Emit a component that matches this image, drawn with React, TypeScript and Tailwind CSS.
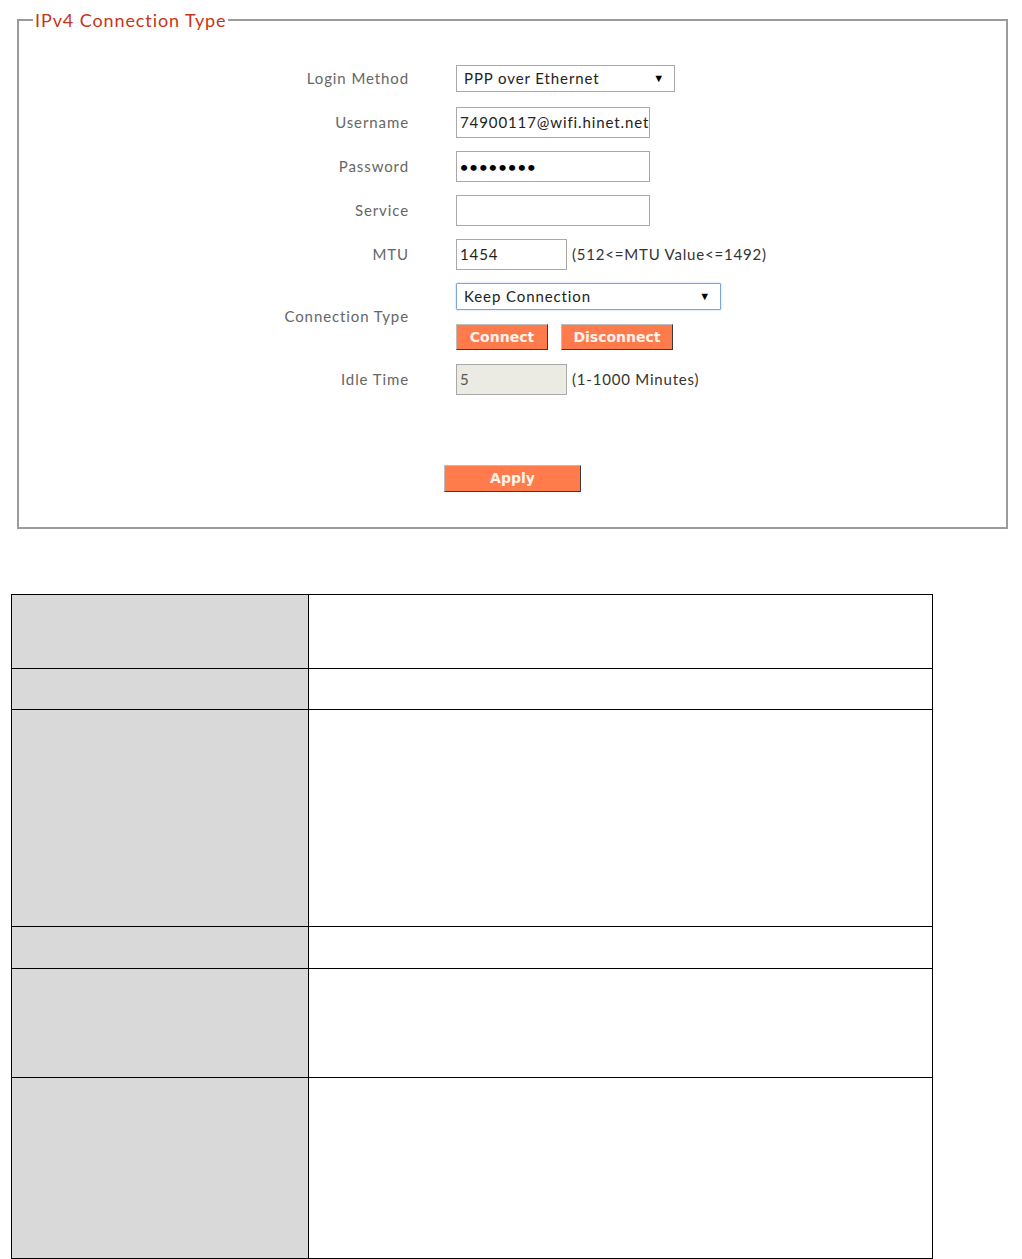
import React from "react";

const font = { fontFamily: "Lato, 'Open Sans', sans-serif" };

function Row({ label, children }: { label: string; children: React.ReactNode }) {
  return (
    <div className="flex h-[44px] items-center">
      <div className="w-[390px] pr-0 text-right text-[15px] tracking-[0.9px] text-[#666]">{label}</div>
      <div className="ml-[47px] flex items-center">{children}</div>
    </div>
  );
}

function Btn({ children, w, h = "h-[26px]" }: { children: React.ReactNode; w: string; h?: string }) {
  return (
    <div
      className={`${w} ${h} flex items-center justify-center border border-t-[#bdbdbd] border-l-[#bdbdbd] border-r-[#3a3a3a] border-b-[#3a3a3a] bg-[#ff7b4c] text-[14px] font-bold text-[#fff4ec]`}
      style={{ fontFamily: "'DejaVu Sans', Verdana, sans-serif" }}
    >
      {children}
    </div>
  );
}

export default function App() {
  const rows = [73, 41, 217, 42, 109, 181];
  return (
    <div className="min-h-[1259px] w-[1022px] bg-white" style={font}>
      <div className="h-[9px]" />
      <fieldset className="ml-[17px] w-[991px] border-2 border-[#9b9b9b] px-0 pb-[35px] pt-[25px]">
        <legend className="ml-[14px] px-[2px] text-[18px] leading-[22px] tracking-[0.9px] text-[#c8341a]">IPv4 Connection Type</legend>
        <div className="flex flex-col">
          <Row label="Login Method">
            <div className="flex h-[27px] w-[219px] items-center justify-between border border-[#a9a9a9] pl-[7px] pr-[9px] text-[15px] tracking-[0.9px] text-[#222]">
              <span>PPP over Ethernet</span>
              <span className="text-[11px] text-black">▼</span>
            </div>
          </Row>
          <Row label="Username">
            <div className="flex h-[31px] w-[194px] items-center overflow-hidden whitespace-nowrap border border-[#a9a9a9] pl-[3px] text-[15px] tracking-[0.9px] text-[#222]">
              74900117@wifi.hinet.net
            </div>
          </Row>
          <Row label="Password">
            <div className="flex h-[31px] w-[194px] items-center border border-[#a9a9a9] pl-[3px] text-[14px] font-bold tracking-[1.5px] text-black">
              ••••••••
            </div>
          </Row>
          <Row label="Service">
            <div className="h-[31px] w-[194px] border border-[#a9a9a9]" />
          </Row>
          <Row label="MTU">
            <div className="flex h-[31px] w-[111px] items-center border border-[#a9a9a9] pl-[3px] text-[15px] tracking-[0.9px] text-[#222]">1454</div>
            <span className="ml-[5px] text-[15px] tracking-[0.8px] text-[#333]">(512&lt;=MTU Value&lt;=1492)</span>
          </Row>
          <div className="flex h-[81px] items-center">
            <div className="w-[390px] text-right text-[15px] tracking-[0.9px] text-[#666]">Connection Type</div>
            <div className="ml-[47px] flex flex-col gap-[14px]">
              <div className="flex h-[27px] w-[265px] items-center justify-between rounded-[1px] border border-[#7aa7e0] pl-[7px] pr-[9px] text-[15px] tracking-[0.9px] text-[#222] shadow-[0_0_2px_#9fc3ef]">
                <span>Keep Connection</span>
                <span className="text-[11px] text-black">▼</span>
              </div>
              <div className="flex gap-[13px]">
                <Btn w="w-[92px]">Connect</Btn>
                <Btn w="w-[112px]">Disconnect</Btn>
              </div>
            </div>
          </div>
          <Row label="Idle Time">
            <div className="flex h-[31px] w-[111px] items-center border border-[#a9a9a9] bg-[#ebebe4] pl-[3px] text-[15px] text-[#555]">5</div>
            <span className="ml-[5px] text-[15px] tracking-[0.8px] text-[#333]">(1-1000 Minutes)</span>
          </Row>
        </div>
        <div className="mt-[64px] flex justify-center">
          <Btn w="w-[137px]" h="h-[27px]">Apply</Btn>
        </div>
      </fieldset>
      <div className="h-[65px]" />
      <div className="ml-[11px] w-[922px] border border-b-2 border-black">
        {rows.map((h, i) => (
          <div key={i} className={`flex ${i > 0 ? "border-t border-black" : ""}`} style={{ height: h }}>
            <div className="w-[297px] border-r border-black bg-[#d9d9d9]" />
            <div className="flex-1 bg-white" />
          </div>
        ))}
      </div>
    </div>
  );
}
